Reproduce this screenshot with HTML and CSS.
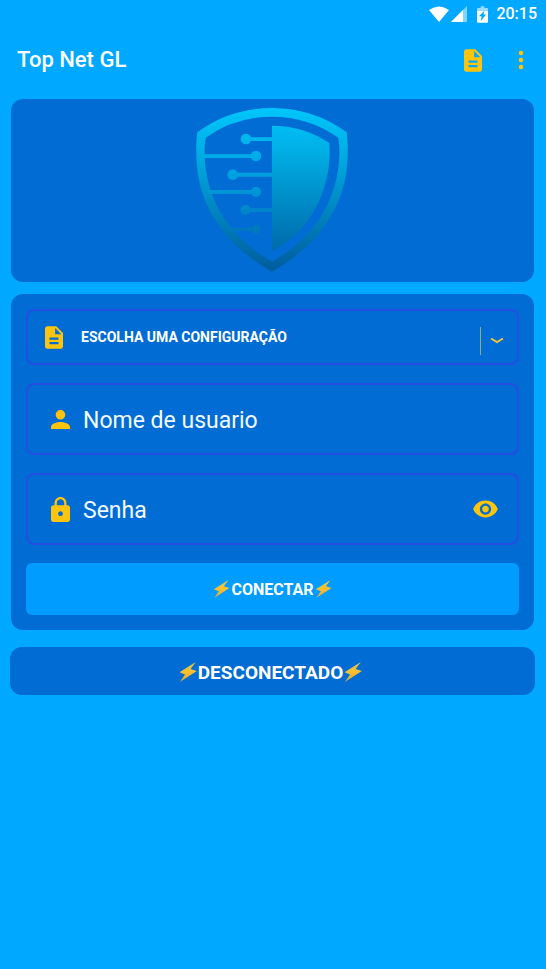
FILE: index.html
```html
<!DOCTYPE html>
<html lang="pt-BR">
<head>
<meta charset="utf-8">
<meta name="viewport" content="width=device-width, initial-scale=1">
<title>Top Net GL</title>
<link rel="stylesheet" href="styles.css">
</head>
<body>
<svg class="defs" aria-hidden="true">
  <defs>
    <linearGradient id="bolt-fill" x1="0" y1="0" x2="0" y2="1">
      <stop offset="0" stop-color="#d8c850"/>
      <stop offset=".5" stop-color="#fbc02d"/>
      <stop offset="1" stop-color="#d9a441"/>
    </linearGradient>
    <symbol id="bolt" viewBox="0 0 48 54">
      <path fill="url(#bolt-fill)" d="M45 0 1 28l15 6L2 54 48 24l-17-5z"/>
    </symbol>
    <symbol id="file" viewBox="4 2 16 20">
      <path d="M14 2H6c-1.100 0-2 .9-2 2v16c0 1.100.9 2 2 2h12c1.100 0 2-.9 2-2V8l-6-6zm2 16H8v-2h8v2zm0-4H8v-2h8v2zm-3-5V3.500L18.500 9H13z"/>
    </symbol>
  </defs>
</svg>

<div class="status-bar">
  <svg class="wifi" viewBox="0 0 20 16" aria-hidden="true"><path d="M0 4Q10-3 20 4L10 16z"/></svg>
  <svg class="signal" viewBox="0 0 16 16" aria-hidden="true"><path d="M16 0 0 16h16z" opacity=".5"/><path d="M12 4 0 16h12z"/></svg>
  <svg class="battery" viewBox="0 0 12 18" aria-hidden="true"><path opacity=".6" d="M4 0h4v2h3q1 0 1 1v2H0V3q0-1 1-1h3z"/><path fill-rule="evenodd" d="M0 5h12v12q0 1-1 1H1q-1 0-1-1zM8 5l-6 6h3l-1 5 6-7H7z"/></svg>
  <time class="clock">20:15</time>
</div>

<header class="app-bar">
  <h1 class="title">Top Net GL</h1>
  <button class="icon-button" type="button" aria-label="Arquivo"><svg class="icon-file" aria-hidden="true"><use href="#file"/></svg></button>
  <button class="icon-button" type="button" aria-label="Menu"><svg class="icon-more" viewBox="0 0 6 20" aria-hidden="true"><circle cx="3" cy="3" r="2.300"/><circle cx="3" cy="10" r="2.300"/><circle cx="3" cy="17" r="2.300"/></svg></button>
</header>

<main class="content">
  <section class="card logo-card">
    <svg class="logo" viewBox="48 37 456 492" role="img" aria-label="Escudo">
      <defs>
        <linearGradient id="shield" gradientUnits="userSpaceOnUse" x1="0" y1="37" x2="0" y2="528">
          <stop offset="0" stop-color="#00c6fb"/>
          <stop offset=".25" stop-color="#00b0e6"/>
          <stop offset=".6" stop-color="#0088c4"/>
          <stop offset="1" stop-color="#005c9e"/>
        </linearGradient>
        <linearGradient id="trace" gradientUnits="userSpaceOnUse" x1="0" y1="115" x2="0" y2="415">
          <stop offset="0" stop-color="#00b8f0"/>
          <stop offset=".5" stop-color="#009bdc"/>
          <stop offset=".8" stop-color="#0082c8"/>
          <stop offset="1" stop-color="#0078ba"/>
        </linearGradient>
      </defs>
      <path fill="url(#shield)" fill-rule="evenodd" d="M52 110Q150 37 276 37Q400 37 500 110Q504 135 503 180C500 335 410 452 276 528C140 452 52 335 49 180Q48 135 52 110zM77 126Q73 150 74 182C80 320 152 428 276 498C400 428 472 320 478 182Q479 150 475 126Q385 63 276 63Q165 63 77 126z"/>
      <path fill="url(#shield)" d="M276 90Q370 90 448 142Q451 175 447 208C432 325 370 418 276 466z"/>
      <g fill="url(#trace)">
        <path d="M198 125h78v11h-78zM72 176h156v11H72zM158 231h118v12H158zM84 283h144v12H84zM196 338h80v11h-80zM146 397h82v8h-82z"/>
        <circle cx="198" cy="130" r="16"/><circle cx="228" cy="181" r="16"/><circle cx="158" cy="237" r="16"/>
        <circle cx="228" cy="289" r="15"/><circle cx="196" cy="343" r="15"/><circle cx="228" cy="401" r="13"/>
      </g>
    </svg>
  </section>

  <form class="card form-card">
    <div class="field config-field">
      <svg class="icon-file" aria-hidden="true"><use href="#file"/></svg>
      <select class="config-select" aria-label="Configuração"><option>ESCOLHA UMA CONFIGURAÇÃO</option></select>
      <span class="divider"></span>
      <svg class="icon-chevron" viewBox="0 0 14 7" aria-hidden="true"><path d="M1 1.500 7 5l6-3.500"/></svg>
    </div>
    <div class="field text-field">
      <svg class="icon-user" viewBox="4 4 16 16" aria-hidden="true"><path d="M12 12c2.210 0 4-1.790 4-4s-1.790-4-4-4-4 1.790-4 4 1.790 4 4 4zm0 2c-2.670 0-8 1.340-8 4v2h16v-2c0-2.660-5.330-4-8-4z"/></svg>
      <input class="text-input" type="text" placeholder="Nome de usuario" aria-label="Nome de usuario">
    </div>
    <div class="field text-field">
      <svg class="icon-lock" viewBox="4 1 16 21" aria-hidden="true"><path d="M18 8h-1V6c0-2.760-2.240-5-5-5S7 3.240 7 6v2H6c-1.100 0-2 .9-2 2v10c0 1.100.9 2 2 2h12c1.100 0 2-.9 2-2V10c0-1.100-.9-2-2-2zm-6 9c-1.100 0-2-.9-2-2s.9-2 2-2 2 .9 2 2-.9 2-2 2zm3.100-9H8.900V6c0-1.710 1.390-3.100 3.100-3.100s3.100 1.390 3.100 3.100v2z"/></svg>
      <input class="text-input" type="password" placeholder="Senha" aria-label="Senha">
      <button class="icon-button" type="button" aria-label="Mostrar senha"><svg class="icon-eye" viewBox="1 4 22 16" aria-hidden="true"><path d="M12 4.500C7 4.500 2.730 7.610 1 12c1.730 4.390 6 7.500 11 7.500s9.270-3.110 11-7.500c-1.730-4.390-6-7.500-11-7.500zM12 17c-2.760 0-5-2.240-5-5s2.240-5 5-5 5 2.240 5 5-2.240 5-5 5zm0-8c-1.660 0-3 1.340-3 3s1.340 3 3 3 3-1.340 3-3-1.340-3-3-3z"/></svg></button>
    </div>
    <button class="connect" type="button"><svg class="bolt" aria-hidden="true"><use href="#bolt"/></svg>CONECTAR<svg class="bolt" aria-hidden="true"><use href="#bolt"/></svg></button>
  </form>

  <p class="connection" role="status"><svg class="bolt" aria-hidden="true"><use href="#bolt"/></svg>DESCONECTADO<svg class="bolt" aria-hidden="true"><use href="#bolt"/></svg></p>
</main>
</body>
</html>
```
FILE: styles.css
```css
:root {
  --page: #00a8ff;
  --card: #006cd4;
  --line: #244fe2;
  --accent: #fcc40c;
}

* { box-sizing: border-box; }

body {
  margin: 0;
  min-height: 100vh;
  background: var(--page);
  color: #fff;
  font-family: Roboto, "Liberation Sans", sans-serif;
}

svg { display: block; flex: none; fill: var(--accent); }

button, input, select {
  margin: 0;
  padding: 0;
  border: 0;
  background: none;
  color: inherit;
  font: inherit;
}

.defs { position: absolute; width: 0; height: 0; }

.status-bar {
  display: flex;
  align-items: center;
  justify-content: flex-end;
  height: 28px;
  padding-right: 9px;
}

.status-bar svg { fill: #fff; }
.wifi { width: 20px; height: 16px; }
.signal { width: 16px; height: 16px; margin-left: 2px; }
.battery { width: 11px; height: 17px; margin: 0 8px 0 10px; }
.clock { font-size: 16px; font-weight: 500; line-height: 28px; }

.app-bar {
  display: flex;
  align-items: center;
  height: 64px;
  padding: 0 22px 0 17px;
}

.title {
  flex: 1;
  margin: 0;
  font-size: 22px;
  font-weight: 500;
  line-height: 28px;
}

.icon-button { display: block; flex: none; cursor: pointer; }
.icon-file { width: 18px; height: 23px; }
.icon-more { width: 6px; height: 20px; margin-left: 36px; }

.content { padding: 7px 12px 24px 11px; }

.card {
  margin-bottom: 12px;
  border-radius: 12px;
  background: var(--card);
}

.logo-card {
  display: flex;
  justify-content: center;
  padding: 9px 2px 10px 0;
}

.logo { width: 152px; height: 164px; }

.form-card {
  display: grid;
  gap: 18px;
  margin-bottom: 17px;
  padding: 15px;
}

.field {
  display: flex;
  align-items: center;
  border: 2px solid var(--line);
  border-radius: 8px;
}

.config-field { height: 56px; padding: 0 13px 0 17px; }

.config-select {
  flex: 1;
  min-width: 0;
  height: 52px;
  margin-left: 18px;
  appearance: none;
  font-size: 14px;
  font-weight: 700;
}

.config-select option { color: #000; }

.divider { width: 1px; height: 28px; margin: 8px 9px 0 0; background: #8ab07c; }
.icon-chevron { width: 14px; height: 7px; margin-top: 6px; fill: none; stroke: #efc53a; stroke-width: 2; }

.text-field { height: 72px; padding: 0 19px 0 23px; }

.text-input {
  flex: 1;
  min-width: 0;
  height: 68px;
  margin-left: 13px;
  padding-top: 2px;
  font-size: 23px;
}

.text-input::placeholder { color: #f2faff; opacity: 1; }

.icon-user { width: 19px; height: 19px; }
.icon-lock { width: 19px; height: 25px; }
.icon-eye { width: 25px; height: 18px; }

.connect, .connection {
  display: flex;
  align-items: center;
  justify-content: center;
  gap: 1px;
  font-weight: 700;
}

.connect {
  height: 52px;
  border-radius: 6px;
  background: #009cff;
  font-size: 16px;
  cursor: pointer;
}

.connect .bolt { width: 17px; height: 18px; }

.connection {
  height: 48px;
  margin: 0 -1px;
  padding: 2px 4px 0 0;
  border-radius: 12px;
  background: var(--card);
  font-size: 19px;
}

.connection .bolt { width: 18px; height: 20px; }
```
